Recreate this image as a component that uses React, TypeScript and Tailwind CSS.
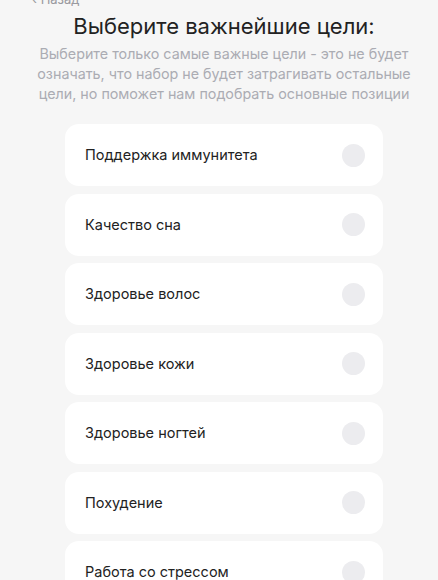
const goals = [
  "Поддержка иммунитета",
  "Качество сна",
  "Здоровье волос",
  "Здоровье кожи",
  "Здоровье ногтей",
  "Похудение",
  "Работа со стрессом",
];

export default function App() {
  return (
    <div
      className="h-[580px] overflow-hidden bg-[#f6f6f6] pl-[10px] text-[#222]"
      style={{ fontFamily: "Inter, 'Noto Sans', sans-serif" }}
    >
      <div className="-mt-[9px] pl-[22px] text-[13px] leading-[16px] text-[#9a9aa0]">
        ‹ Назад
      </div>
      <h1 className="mt-[5px] text-center text-[22px] leading-[28px] font-normal text-[#222]">
        Выберите важнейшие цели:
      </h1>
      <p className="mx-auto mt-[4px] w-[400px] text-center text-[14.3px] leading-[20px] text-[#abacb3]">
        Выберите только самые важные цели - это не будет означать, что набор не будет затрагивать остальные цели, но поможет нам подобрать основные позиции
      </p>
      <div className="mx-auto mt-[20px] flex w-[318px] flex-col gap-[7.5px]">
        {goals.map((g) => (
          <div
            key={g}
            className="flex h-[62px] shrink-0 items-center justify-between rounded-[14px] bg-white pl-[20px] pr-[18px]"
          >
            <span className="text-[14.5px] text-[#222]">{g}</span>
            <span className="h-[23px] w-[23px] rounded-full bg-[#ececef]" />
          </div>
        ))}
      </div>
    </div>
  );
}
